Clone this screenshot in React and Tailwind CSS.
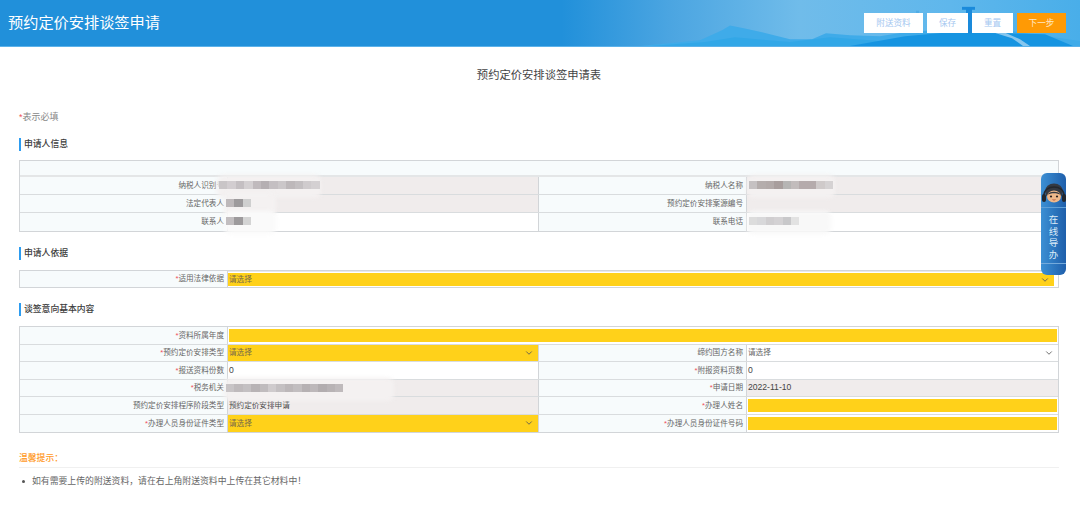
import React from 'react';
import { ChevronDown } from 'lucide-react';

const FONT = "font-['Liberation_Sans','Noto_Sans_CJK_SC',sans-serif]";

function Star() {
  return <span className="text-[#f0505a]">*</span>;
}

// pixelated redaction blocks from the screenshot, they sit over the cell edge
function Redacted({ colors, offset = 'left-0', halo = 'w-[100px]', haloBg = 'bg-[#f4f1f1]' }) {
  return (
    <div className="relative h-full w-0">
      <div className={`absolute top-[4px] flex h-[8px] blur-[0.6px] ${offset}`}>
        <div className={`absolute left-[-2px] top-[-6px] h-[23px] rounded-md blur-[2px] ${halo} ${haloBg}`} />
        {colors.map((c, i) => (
          <span key={i} className="relative h-full w-[8.4px]" style={{ background: c }} />
        ))}
      </div>
    </div>
  );
}

function Label({ children, required }) {
  return (
    <div className="flex w-[208px] items-center justify-end whitespace-nowrap border-r border-[#d2d5d8] bg-[#f7fbfc] pr-[3px] text-[7.6px] text-[#666]">
      {required && <Star />}
      {children}
    </div>
  );
}

function Select({ yellow, className = '' }) {
  return (
    <div className={`flex h-full flex-1 items-center justify-between pl-[1px] pr-[4px] text-[7.6px] ${yellow ? 'bg-[#ffd11a] text-[#77694a]' : 'bg-white text-[#666]'} ${className}`}>
      <span>请选择</span>
      <ChevronDown className="h-[10px] w-[10px] text-[#555]" strokeWidth={2} />
    </div>
  );
}

function YellowInput() {
  return <div className="my-[2px] ml-[1px] mr-[1px] flex-1 bg-[#ffd11a]" />;
}

function Value({ children, bg = 'bg-white', size = 'text-[8.6px]' }) {
  return (
    <div className={`flex h-full flex-1 items-center pl-[1px] text-[#444] ${size} ${bg}`}>
      {children}
    </div>
  );
}

function Row({ children, h = 'h-[18px]', last }) {
  return <div className={`flex ${h} ${last ? '' : 'border-b border-[#d9dcde]'}`}>{children}</div>;
}

function Half({ children, first }) {
  return <div className={`flex ${first ? 'w-[519px] border-r border-[#d2d5d8]' : 'flex-1'}`}>{children}</div>;
}

function SectionTitle({ children, className = '' }) {
  return (
    <div className={`flex h-[13px] items-center border-l-2 border-[#2d9cf0] pl-[3px] pt-[1px] text-[8.8px] font-medium text-[#3c3c3c] ${className}`}>
      {children}
    </div>
  );
}

function HeaderArt() {
  return (
    <svg className="absolute inset-0 h-full w-full blur-[0.5px]" viewBox="0 0 1080 47" preserveAspectRatio="none">
      <path d="M640 47 L700 41 L722 31 L730 26 L745 29 L762 33 L790 40 L812 40 L826 34 L850 36 L880 37 L905 33 L945 30 L1000 30 L1080 42 L1080 47 Z" fill="#3fabe9" />
      <path d="M650 47 L705 43 L735 38 L790 43 L830 38 L880 42 L920 47 Z" fill="#32a7e7" />
      <path d="M850 47 L905 37 L950 33 L1000 34 L1045 35 L1073 47 Z" fill="#1694e1" />
      <path d="M986 29 L1004 33 L1020 40 L1030 47 L1023 47 L1012 39 L996 34 Z" fill="#86c6ee" />
      <rect x="966" y="9" width="6" height="25" fill="#1a8adb" />
      <rect x="962" y="7" width="13" height="3" fill="#1a8adb" />
      <rect x="916" y="11" width="3" height="23" fill="#3ea2e2" opacity="0.5" />
    </svg>
  );
}

function Avatar() {
  return (
    <svg className="mx-auto block blur-[0.3px]" width="26" height="26" viewBox="0 0 26 26">
      <ellipse cx="13" cy="10.5" rx="9" ry="8" fill="#343942" />
      <path d="M3 15 C2 3 24 3 23 15" fill="none" stroke="#23272e" strokeWidth="1.5" />
      <rect x="1" y="13" width="4" height="8" rx="2" fill="#23272e" />
      <rect x="21" y="13" width="4" height="8" rx="2" fill="#23272e" />
      <ellipse cx="13" cy="15.5" rx="7" ry="6" fill="#efb88a" />
      <path d="M6 14 C8 9.5 18 9.5 20 14 C16 11.5 10 11.5 6 14 Z" fill="#343942" />
      <circle cx="10" cy="15.5" r="1.1" fill="#2b2020" />
      <circle cx="16" cy="15.5" r="1.1" fill="#2b2020" />
      <path d="M11.5 18.6 Q13 19.8 14.5 18.6" fill="none" stroke="#b5492f" strokeWidth="0.8" />
    </svg>
  );
}

function ServiceWidget() {
  return (
    <div className="absolute left-[1041px] top-[173px] flex h-[102px] w-[25px] flex-col rounded-[6px] bg-linear-to-r from-[#3c90d4] to-[#1f5fab] text-[#dcebf8]">
      <div className="h-[35px] border-b border-[#5f9fd6] pt-[8px]">
        <Avatar />
      </div>
      <div className="flex h-[56px] flex-col items-center justify-center gap-[2px] border-b border-[#74aadb] pt-[3px] text-[9.5px] leading-[9.5px]">
        <span>在</span>
        <span>线</span>
        <span>导</span>
        <span>办</span>
      </div>
    </div>
  );
}

export default function App() {
  return (
    <div className={`relative h-[514px] w-[1080px] overflow-hidden bg-white ${FONT}`}>
      <header className="relative flex h-[47px] items-center justify-between border-b border-[#5cb2ea] bg-[linear-gradient(90deg,#2190da_0%,#2190da_52%,#4ba5e1_62%,#70bcea_74%,#5fb7ec_88%,#49aee9_100%)] pl-[8px] pr-[14px]">
        <HeaderArt />
        <h1 className="relative text-[15.2px] font-normal text-white">预约定价安排谈签申请</h1>
        <div className="relative flex gap-[4px] text-[8.6px] text-[#a6c8f0]">
          <button className="h-[20px] w-[59px] bg-white">附送资料</button>
          <button className="h-[20px] w-[41px] bg-white">保存</button>
          <button className="h-[20px] w-[41px] bg-white">重置</button>
          <button className="h-[20px] w-[49px] bg-[#ff9a05] text-[#ffe9c8]">下一步</button>
        </div>
      </header>

      <main className="pl-[19px] pr-[21px]">
        <div className="flex h-[56px] items-center justify-center text-[11.3px] text-[#444]">预约定价安排谈签申请表</div>

        <div className="mt-[8px] flex h-[14px] items-center text-[9px] text-[#888]">
          <Star />表示必填
        </div>

        <SectionTitle className="mt-[13px]">申请人信息</SectionTitle>
        <div className="mt-[9px] border border-[#d2d5d8]">
          <div className="h-[16px] border-b-2 border-[#e4e6e7] bg-[#f7fbfc]" />
          <Row>
            <Half first>
              <Label>纳税人识别号</Label>
              <Value bg="bg-[#f0ecec]">
                <Redacted offset="left-[-10px]" halo="w-[104px]" colors={['#c9c5c7', '#d2cdd0', '#c4bfc2', '#d4d0d2', '#c0babd', '#b5afb2', '#c4bfc2', '#cbc7c9', '#bdb8ba', '#c3bfc1', '#cfcbcd', '#d4d0d2']} />
              </Value>
            </Half>
            <Half>
              <Label>纳税人名称</Label>
              <Value bg="bg-[#f0ecec]">
                <Redacted offset="left-[1px]" halo="w-[88px]" colors={['#c5c1c2', '#b4adac', '#b2aaa9', '#a89e9d', '#b6b5b4', '#c2bcbc', '#b5abac', '#b5abac', '#cfcaca', '#d5d2d3']} />
              </Value>
            </Half>
          </Row>
          <Row>
            <Half first>
              <Label>法定代表人</Label>
              <Value bg="bg-[#f0ecec]">
                <Redacted offset="left-[-3px]" halo="w-[52px]" colors={['#bdb8ba', '#9d9a9c', '#cfcfcf']} />
              </Value>
            </Half>
            <Half>
              <Label>预约定价安排案源编号</Label>
              <Value bg="bg-[#f0ecec]" />
            </Half>
          </Row>
          <Row last>
            <Half first>
              <Label>联系人</Label>
              <Value>
                <Redacted offset="left-[-3px]" halo="w-[52px]" haloBg="bg-[#fafafa]" colors={['#c2bec0', '#9d9a9c', '#d4d4d4']} />
              </Value>
            </Half>
            <Half>
              <Label>联系电话</Label>
              <Value>
                <Redacted offset="left-[1px]" halo="w-[84px]" haloBg="bg-[#f8f8f8]" colors={['#dcdcdc', '#d8d8da', '#d0ced0', '#d4d2d4', '#c8c8ca', '#e2e2e2']} />
              </Value>
            </Half>
          </Row>
        </div>

        <SectionTitle className="mt-[15px]">申请人依据</SectionTitle>
        <div className="mt-[10px] flex h-[18px] border border-[#d2d5d8]">
          <Label required>适用法律依据</Label>
          <div className="flex flex-1 border-t border-[#e8e9ea] pb-[1px] pr-[4px] pt-[1px]">
            <Select yellow />
          </div>
        </div>

        <SectionTitle className="mt-[15px]">谈签意向基本内容</SectionTitle>
        <div className="mt-[10px] border border-[#d2d5d8]">
          <Row h="h-[17.5px]">
            <Label required>资料所属年度</Label>
            <YellowInput />
          </Row>
          <Row h="h-[17.5px]">
            <Half first>
              <Label required>预约定价安排类型</Label>
              <Select yellow />
            </Half>
            <Half>
              <Label>缔约国方名称</Label>
              <Select />
            </Half>
          </Row>
          <Row h="h-[17.5px]">
            <Half first>
              <Label required>报送资料份数</Label>
              <Value>0</Value>
            </Half>
            <Half>
              <Label required>附报资料页数</Label>
              <Value>0</Value>
            </Half>
          </Row>
          <Row h="h-[17.5px]">
            <Half first>
              <Label required>税务机关</Label>
              <Value bg="bg-[#f0ecec]">
                <Redacted offset="left-[-3px]" halo="w-[170px]" colors={['#c8c4c6', '#bfbabc', '#c4c0c2', '#b8b3b5', '#c0bcbe', '#cfcbcd', '#c4c0c2', '#bcb7b9', '#c2bec0', '#b6b1b3', '#bdb8ba', '#b2adaf', '#b8b3b5', '#bfbabc']} />
              </Value>
            </Half>
            <Half>
              <Label required>申请日期</Label>
              <Value bg="bg-[#f0ecec]">2022-11-10</Value>
            </Half>
          </Row>
          <Row h="h-[17.5px]">
            <Half first>
              <Label>预约定价安排程序阶段类型</Label>
              <Value bg="bg-[#f0ecec]" size="text-[7.6px]">预约定价安排申请</Value>
            </Half>
            <Half>
              <Label required>办理人姓名</Label>
              <YellowInput />
            </Half>
          </Row>
          <Row h="h-[17.5px]" last>
            <Half first>
              <Label required>办理人员身份证件类型</Label>
              <Select yellow />
            </Half>
            <Half>
              <Label required>办理人员身份证件号码</Label>
              <YellowInput />
            </Half>
          </Row>
        </div>

        <div className="mt-[17px] flex h-[18px] items-start border-b border-[#f0f0f0] pt-[2px] text-[8.8px] font-medium text-[#ff9a1f]">温馨提示：</div>
        <div className="mt-[7px] flex items-center text-[8.85px] text-[#666]">
          <span className="ml-[3px] mr-[7px] h-[3px] w-[3px] rounded-full bg-[#555]" />
          如有需要上传的附送资料，请在右上角附送资料中上传在其它材料中！
        </div>
      </main>

      <ServiceWidget />
    </div>
  );
}
